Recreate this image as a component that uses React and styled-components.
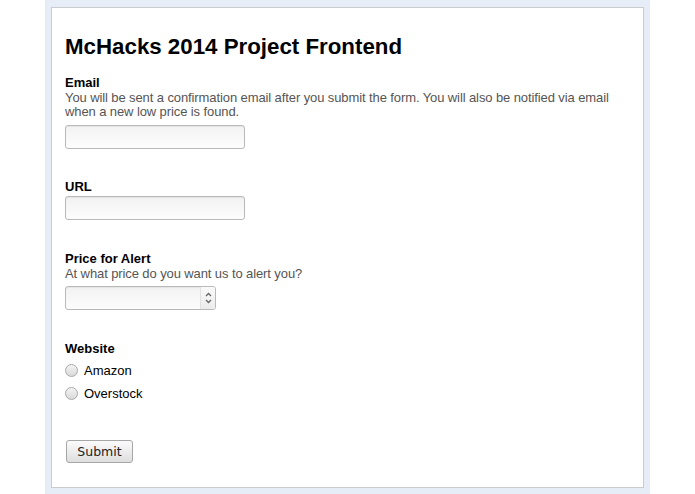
import styled, { createGlobalStyle } from "styled-components";

const Global = createGlobalStyle`
  body {
    margin: 0;
    background: #fff;
    font-family: "Liberation Sans", Arial, sans-serif;
  }
`;

const Backdrop = styled.div`
  margin-left: 45px;
  width: 605px;
  height: 494px;
  box-sizing: border-box;
  padding: 7px 6px 6px 6px;
  background: #e7edf6;
`;

const Card = styled.form`
  height: 100%;
  box-sizing: border-box;
  background: #fff;
  border: 1px solid #c9cbcf;
  padding: 27px 12px 0 13px;
`;

const Title = styled.h1`
  margin: 0 0 16px;
  font-size: 22.3px;
  line-height: 24px;
  font-weight: bold;
  color: #000;
`;

const Field = styled.div`
  margin-bottom: ${(p) => p.gap || 30}px;
`;

const Label = styled.label`
  display: block;
  font-size: 13px;
  line-height: 16px;
  font-weight: bold;
  color: #000;
`;

const Desc = styled.p`
  margin: 0;
  font-size: 13px;
  line-height: 14px;
  letter-spacing: -0.1px;
  color: #555;
`;

const TextBox = styled.input`
  display: block;
  box-sizing: border-box;
  width: 180px;
  height: 24px;
  margin-top: ${(p) => p.top || 1}px;
  border: 1px solid #b9b9b9;
  border-radius: 3px;
  background: linear-gradient(#f2f2f2, #fdfdfd);
  box-shadow: inset 0 1px 1px rgba(0, 0, 0, 0.06);
  outline: none;
`;

const NumberBox = styled.div`
  display: flex;
  box-sizing: border-box;
  width: 151px;
  height: 24px;
  margin-top: 5px;
  border: 1px solid #b9b9b9;
  border-radius: 3px;
  background: linear-gradient(#f2f2f2, #fdfdfd);
  box-shadow: inset 0 1px 1px rgba(0, 0, 0, 0.06);
`;

const NumberInput = styled.input`
  flex: 1;
  min-width: 0;
  border: none;
  background: transparent;
  outline: none;
`;

const Spinner = styled.div`
  width: 14px;
  display: flex;
  flex-direction: column;
  align-items: center;
  justify-content: center;
  gap: 2px;
  border-left: 1px solid #e2e2e2;
  background: linear-gradient(#fafafa, #ececec);
  border-radius: 0 2px 2px 0;
`;

const Chevron = ({ up }) => (
  <svg width="7" height="5" viewBox="0 0 7 5">
    <path
      d={up ? "M1 4 L3.5 1.5 L6 4" : "M1 1 L3.5 3.5 L6 1"}
      fill="none"
      stroke="#666"
      strokeWidth="1.3"
    />
  </svg>
);

const Options = styled.div`
  display: flex;
  flex-direction: column;
  gap: 7px;
  margin-top: 5px;
`;

const Option = styled.label`
  display: flex;
  align-items: center;
  gap: 6px;
  height: 16px;
  font-size: 13px;
  color: #000;
`;

const Radio = styled.span`
  width: 11px;
  height: 11px;
  border-radius: 50%;
  border: 1px solid #a9a9a9;
  background: linear-gradient(#f4f4f4, #d9d9d9);
`;

const Submit = styled.button`
  margin-left: 1px;
  width: 67px;
  height: 23px;
  padding: 0;
  border: 1px solid #a6a6a6;
  border-radius: 3px;
  background: linear-gradient(#fbfbfb, #dedede);
  font-family: "DejaVu Sans", sans-serif;
  font-size: 12.5px;
  color: #222;
`;

export default function App() {
  return (
    <>
      <Global />
      <Backdrop>
        <Card onSubmit={(e) => e.preventDefault()}>
          <Title>McHacks 2014 Project Frontend</Title>

          <Field>
            <Label>Email</Label>
            <Desc>
              You will be sent a confirmation email after you submit the form.
              You will also be notified via email when a new low price is found.
            </Desc>
            <TextBox type="email" top={6} />
          </Field>

          <Field gap={31}>
            <Label>URL</Label>
            <TextBox type="text" />
          </Field>

          <Field gap={31}>
            <Label>Price for Alert</Label>
            <Desc>At what price do you want us to alert you?</Desc>
            <NumberBox>
              <NumberInput type="text" />
              <Spinner>
                <Chevron up />
                <Chevron />
              </Spinner>
            </NumberBox>
          </Field>

          <Field gap={39}>
            <Label>Website</Label>
            <Options>
              <Option>
                <Radio />
                Amazon
              </Option>
              <Option>
                <Radio />
                Overstock
              </Option>
            </Options>
          </Field>

          <Submit type="submit">Submit</Submit>
        </Card>
      </Backdrop>
    </>
  );
}
